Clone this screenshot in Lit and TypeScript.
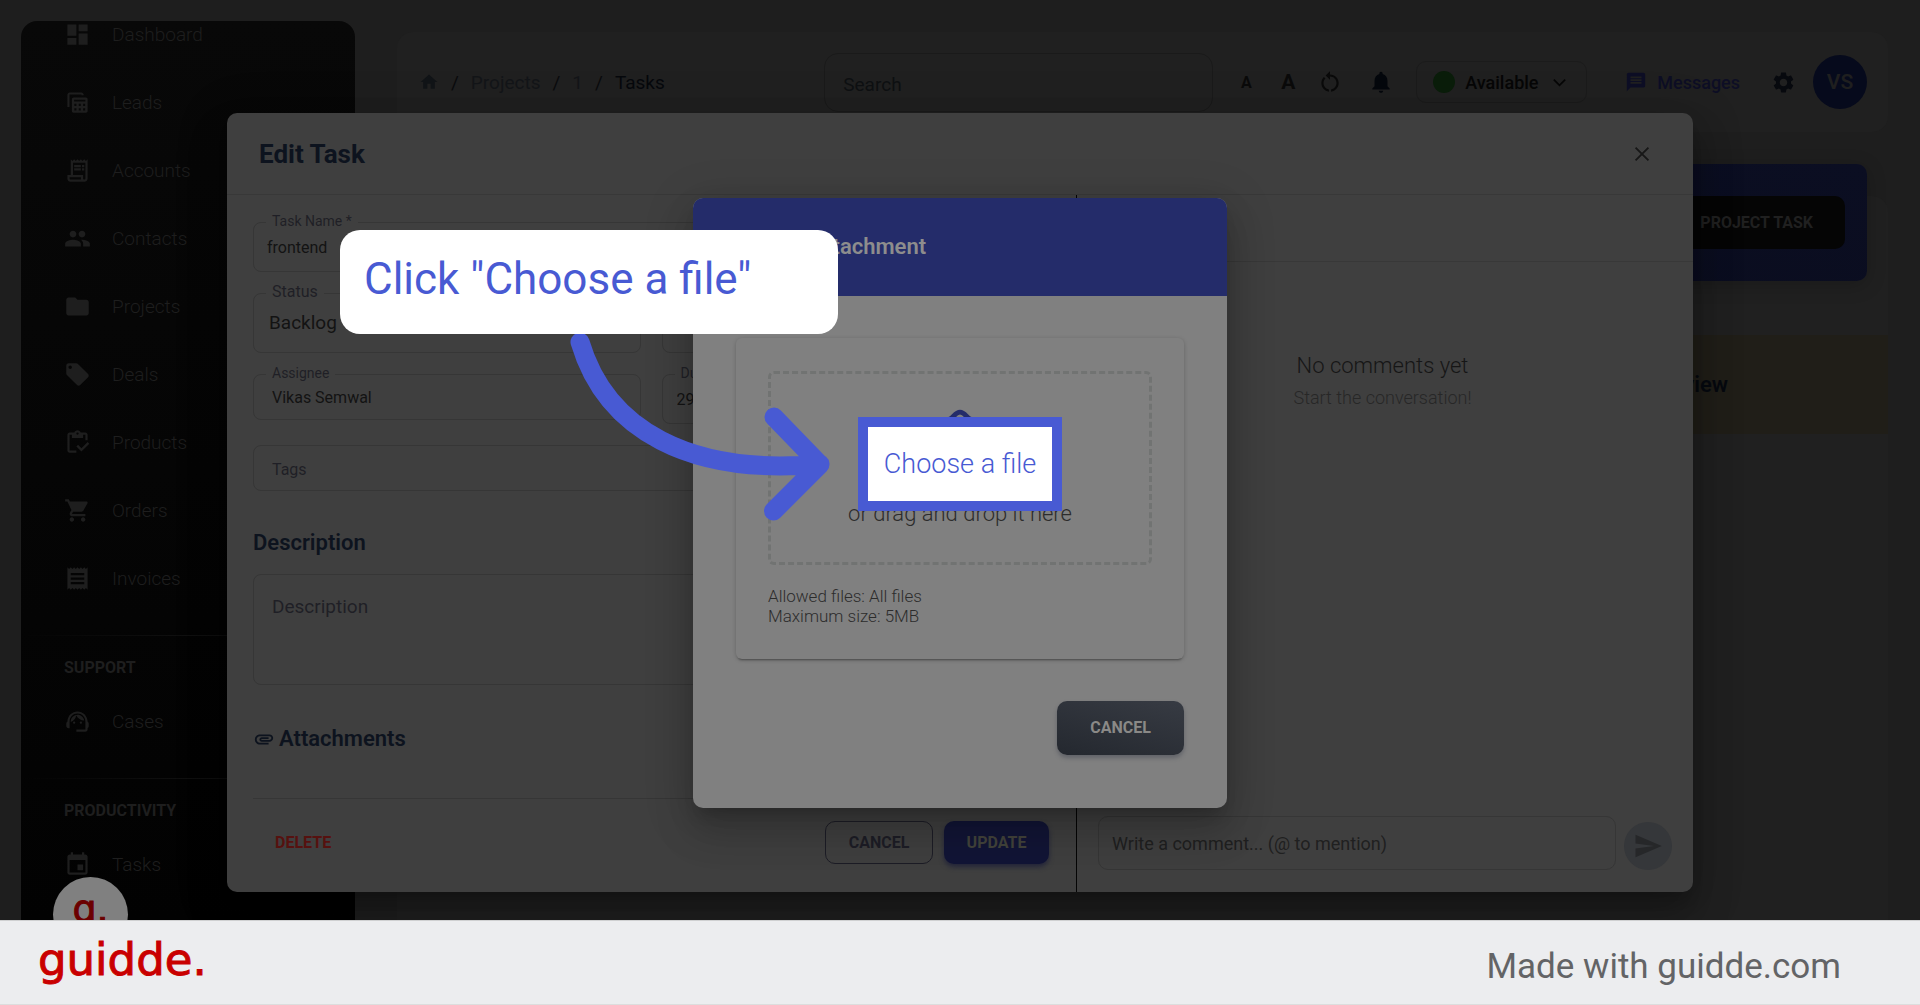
import { LitElement, html, css, svg, nothing } from "lit";
import { customElement, property } from "lit/decorators.js";

const ICONS: Record<string, unknown> = {
  dashboard: svg`<path d="M3 13h8V3H3v10zm0 8h8v-6H3v6zm10 0h8V11h-8v10zm0-18v6h8V3h-8z"/>`,
  leads: svg`<path d="M3 16V5c0-1.100.9-2 2-2h10.500c1.100 0 2 .9 2 2v.5h-2V4.800H4.900V16z"/><path fill-rule="evenodd" d="M8.500 7.500h11c.8 0 1.500.7 1.500 1.500v10.500c0 .8-.7 1.500-1.500 1.500h-11c-.8 0-1.500-.7-1.500-1.500V9c0-.8.7-1.500 1.500-1.500zM9 9.500v1.500h10V9.500zM9.200 13v2h1.800v-2zm3.900 0v2h1.800v-2zm3.900 0v2h1.800v-2zM9.200 17v2h1.800v-2zm3.900 0v2h1.800v-2zm3.900 0v2h1.800v-2z"/>`,
  accounts: svg`<path d="M19.500 3.500 18 2l-1.500 1.500L15 2l-1.500 1.500L12 2l-1.500 1.500L9 2 7.500 3.500 6 2v14H3v3c0 1.660 1.340 3 3 3h12c1.660 0 3-1.340 3-3V2l-1.500 1.500zM15 20H6c-.55 0-1-.45-1-1v-1h10v2zm4-1c0 .55-.45 1-1 1s-1-.45-1-1v-3H8V5h11v14z"/><path d="M9 7h6v2H9zM16 7h2v2h-2zM9 10h6v2H9zM16 10h2v2h-2z"/>`,
  contacts: svg`<path d="M16 11c1.660 0 2.990-1.340 2.990-3S17.660 5 16 5c-1.660 0-3 1.340-3 3s1.340 3 3 3zm-8 0c1.660 0 2.990-1.340 2.990-3S9.660 5 8 5C6.340 5 5 6.340 5 8s1.340 3 3 3zm0 2c-2.330 0-7 1.170-7 3.500V19h14v-2.500c0-2.330-4.670-3.500-7-3.500zm8 0c-.29 0-.62.020-.97.050 1.160.84 1.970 1.970 1.970 3.450V19h6v-2.500c0-2.330-4.670-3.500-7-3.500z"/>`,
  folder: svg`<path d="M10 4H4c-1.100 0-1.990.9-1.990 2L2 18c0 1.100.9 2 2 2h16c1.100 0 2-.9 2-2V8c0-1.100-.9-2-2-2h-8l-2-2z"/>`,
  tag: svg`<path d="M21.410 11.580l-9-9C12.050 2.220 11.550 2 11 2H4c-1.100 0-2 .9-2 2v7c0 .55.22 1.050.59 1.420l9 9c.36.36.86.58 1.410.58.55 0 1.050-.22 1.410-.59l7-7c.37-.36.59-.86.59-1.410 0-.55-.23-1.060-.59-1.420zM5.500 7C4.670 7 4 6.330 4 5.500S4.670 4 5.500 4 7 4.670 7 5.500 6.330 7 5.500 7z"/>`,
  products: svg`<path d="M5 5h2v3h10V5h2v5h2V5c0-1.100-.9-2-2-2h-4.180C14.400 1.840 13.300 1 12 1s-2.400.84-2.820 2H5c-1.100 0-2 .9-2 2v14c0 1.100.9 2 2 2h6v-2H5V5zm7-2c.55 0 1 .45 1 1s-.45 1-1 1-1-.45-1-1 .45-1 1-1z"/><path d="M21 11.500 15.510 17l-3.010-3-1.500 1.500 4.510 4.500L22.500 13z"/>`,
  cart: svg`<path d="M7 18c-1.100 0-1.990.9-1.990 2S5.900 22 7 22s2-.9 2-2-.9-2-2-2zM1 2v2h2l3.600 7.590-1.350 2.450c-.16.28-.25.61-.25.96 0 1.100.9 2 2 2h12v-2H7.420c-.14 0-.25-.11-.25-.25l.03-.12.9-1.630h7.450c.75 0 1.410-.41 1.750-1.030l3.580-6.490c.08-.14.12-.31.12-.48 0-.55-.45-1-1-1H5.210l-.94-2H1zm16 16c-1.100 0-1.990.9-1.990 2s.89 2 1.990 2 2-.9 2-2-.9-2-2-2z"/>`,
  invoices: svg`<path d="M18 17H6v-2h12v2zm0-4H6v-2h12v2zm0-4H6V7h12v2zM3 22l1.500-1.500L6 22l1.500-1.500L9 22l1.500-1.500L12 22l1.500-1.500L15 22l1.500-1.500L18 22l1.500-1.500L21 22V2l-1.500 1.500L18 2l-1.500 1.500L15 2l-1.500 1.500L12 2l-1.500 1.500L9 2 7.500 3.500 6 2 4.500 3.500 3 2v20z"/>`,
  agent: svg`<path d="M21 12.220C21 6.730 16.740 3 12 3c-4.690 0-9 3.650-9 9.280-.6.34-1 .98-1 1.720v2c0 1.100.9 2 2 2h1v-6.100c0-3.870 3.130-7 7-7s7 3.130 7 7V19h-8v2h8c1.100 0 2-.9 2-2v-1.220c.59-.31 1-.92 1-1.640v-2.300c0-.7-.41-1.310-1-1.620z"/><circle cx="9" cy="13" r="1"/><circle cx="15" cy="13" r="1"/><path d="M18 11.030C17.520 8.180 15.040 6 12.050 6c-3.030 0-6.290 2.510-6.030 6.450 2.470-1.010 4.330-3.210 4.860-5.890 1.310 2.630 4 4.440 7.120 4.470z"/>`,
  event: svg`<path d="M17 12h-5v5h5v-5zM16 1v2H8V1H6v2H5c-1.110 0-1.990.9-1.990 2L3 19c0 1.100.89 2 2 2h14c1.100 0 2-.9 2-2V5c0-1.100-.9-2-2-2h-1V1h-2zm3 18H5V8h14v11z"/>`,
  home: svg`<path d="M10 20v-6h4v6h5v-8h3L12 3 2 12h3v8z"/>`,
  restart: svg`<path d="M12 5V2L8 6l4 4V7c3.310 0 6 2.690 6 6 0 2.970-2.170 5.430-5 5.910v2.020c3.950-.49 7-3.850 7-7.930 0-4.420-3.580-8-8-8zm-6 8c0-1.650.67-3.150 1.760-4.240L6.340 7.340C4.900 8.790 4 10.790 4 13c0 4.080 3.050 7.440 7 7.930v-2.020c-2.830-.48-5-2.940-5-5.910z"/>`,
  bell: svg`<path d="M12 22c1.100 0 2-.9 2-2h-4c0 1.100.89 2 2 2zm6-6v-5c0-3.070-1.640-5.640-4.500-6.320V4c0-.83-.67-1.500-1.500-1.500s-1.500.67-1.500 1.500v.68C7.630 5.360 6 7.920 6 11v5l-2 2v1h16v-1l-2-2z"/>`,
  chevron: svg`<path d="M4 8l8 8 8-8" fill="none" stroke="currentColor" stroke-width="2.400"/>`,
  message: svg`<path d="M20 2H4c-1.100 0-1.990.9-1.990 2L2 22l4-4h14c1.100 0 2-.9 2-2V4c0-1.100-.9-2-2-2zM6 12h12v2H6v-2zm0-3h12v2H6V9zm12-1H6V6h12v2z"/>`,
  gear: svg`<path d="M19.140 12.940c.04-.3.06-.61.06-.94 0-.32-.02-.64-.07-.94l2.030-1.580c.18-.14.23-.41.12-.61l-1.920-3.320c-.12-.22-.37-.29-.59-.22l-2.390.96c-.5-.38-1.030-.7-1.620-.94l-.36-2.540c-.04-.24-.24-.41-.48-.41h-3.840c-.24 0-.43.17-.47.41l-.36 2.540c-.59.24-1.130.57-1.620.94l-2.390-.96c-.22-.08-.47 0-.59.22L2.740 8.870c-.12.21-.08.47.12.61l2.030 1.580c-.05.3-.09.63-.09.94s.02.64.07.94l-2.030 1.580c-.18.14-.23.41-.12.61l1.920 3.320c.12.22.37.29.59.22l2.390-.96c.5.38 1.030.7 1.620.94l.36 2.540c.05.24.24.41.48.41h3.840c.24 0 .44-.17.47-.41l.36-2.540c.59-.24 1.130-.56 1.620-.94l2.390.96c.22.08.47 0 .59-.22l1.920-3.320c.12-.22.07-.47-.12-.61l-2.010-1.580zM12 15.600c-1.980 0-3.600-1.620-3.600-3.600s1.620-3.600 3.600-3.600 3.600 1.620 3.600 3.600-1.620 3.600-3.600 3.600z"/>`,
  send: svg`<path d="M2.010 21L23 12 2.010 3 2 10l15 2-15 2z"/>`,
  clip: svg`<path d="M2 12.500C2 9.460 4.460 7 7.500 7H18c2.210 0 4 1.790 4 4s-1.790 4-4 4H9.500C8.120 15 7 13.880 7 12.500S8.120 10 9.500 10H17v2H9.410c-.55 0-.55 1 0 1H18c1.100 0 2-.9 2-2s-.9-2-2-2H7.500C5.570 9 4 10.570 4 12.500S5.570 16 7.500 16H17v2H7.500C4.460 18 2 15.540 2 12.500z"/>`,
  close: svg`<path d="M5 5l14 14M19 5L5 19" fill="none" stroke="currentColor" stroke-width="2"/>`,
  cloud: svg`<path d="M6 20a5 5 0 0 1-4-8c0-3.200 1-5.200 3.800-5.800C8.400 6 9 2.200 12 2.200S15.600 6 18.200 6.200C21 6.800 22 8.800 22 12a5 5 0 0 1-4 8z" fill="none" stroke="currentColor" stroke-width="2.600"/>`,
};

@customElement("ui-icon")
export class UiIcon extends LitElement {
  static styles = css`
    :host { display: inline-flex; width: 24px; height: 24px; flex: none; }
    svg { width: 100%; height: 100%; fill: currentColor; display: block; }
  `;
  @property() name = "";
  render() {
    return html`<svg viewBox="0 0 24 24" aria-hidden="true">${ICONS[this.name] ?? nothing}</svg>`;
  }
}

@customElement("side-nav")
export class SideNav extends LitElement {
  static styles = css`
    :host {
      display: block; width: 334px; flex: none; overflow: hidden; box-sizing: border-box;
      border-radius: 16px 16px 0 0;
      background: linear-gradient(#080808, #020202);
      color: #1e1e1e;
    }
    .scroll { margin-top: -21px; }
    .item {
      display: flex; align-items: center; gap: 21px; height: 68px; padding-left: 43px;
      color: inherit; text-decoration: none; font-size: 19px; font-weight: 300;
    }
    .item ui-icon { width: 27px; height: 27px; }
    .rule { border: 0; height: 1px; margin: 23px 0 0; background: linear-gradient(90deg, transparent, #101010, transparent); }
    h2 { margin: 22px 0 9px 43px; font-size: 16px; line-height: 20px; font-weight: 700; }
  `;
  private main = [
    ["dashboard", "Dashboard"], ["leads", "Leads"], ["accounts", "Accounts"],
    ["contacts", "Contacts"], ["folder", "Projects"], ["tag", "Deals"],
    ["products", "Products"], ["cart", "Orders"], ["invoices", "Invoices"],
  ];
  private item(icon: string, label: string) {
    return html`<a class="item" href="#"><ui-icon name=${icon}></ui-icon>${label}</a>`;
  }
  render() {
    return html`<nav class="scroll">
      ${this.main.map(([i, l]) => this.item(i, l))}
      <hr class="rule" />
      <h2>SUPPORT</h2>
      ${this.item("agent", "Cases")}
      <hr class="rule" />
      <h2>PRODUCTIVITY</h2>
      ${this.item("event", "Tasks")}
    </nav>`;
  }
}

@customElement("top-bar")
export class TopBar extends LitElement {
  static styles = css`
    :host {
      display: flex; align-items: center; height: 100px; box-sizing: border-box;
      padding: 0 21px 0 22px; border-radius: 16px; background: #202020; color: #0a0b0d;
    }
    button { font: inherit; color: inherit; background: none; border: 0; padding: 0; }
    a { color: inherit; text-decoration: none; }
    .crumbs { flex: 1; display: flex; align-items: center; gap: 12px; font-size: 19px; }
    .crumbs a { color: #131518; }
    .crumbs a.here { color: #06080c; }
    .crumbs ui-icon { width: 20px; height: 20px; color: #111417; display: flex; }
    .search {
      box-sizing: border-box; width: 389px; height: 59px; margin-right: 12px; padding: 5px 18px 0;
      border: 1px solid #1a1a1a; border-radius: 14px; background: none; outline: none;
      font: 400 19px Roboto, sans-serif; color: #0e1012;
    }
    .search::placeholder { color: #0e1012; opacity: 1; }
    .tool { width: 42px; height: 42px; display: grid; place-items: center; color: #0a0a0a; }
    .small { font-size: 16px; font-weight: 700; }
    .large { font-size: 21px; font-weight: 700; }
    .bell { margin-left: 9px; color: #04070c; }
    .bell ui-icon, .tool ui-icon { width: 26px; height: 26px; }
    .status {
      box-sizing: border-box; width: 171px; height: 42px; margin-left: 14px; padding: 0 18px 0 16px;
      display: flex; align-items: center; border: 1px solid #1b1b1b; border-radius: 10px;
      font-size: 18px; font-weight: 500; color: #060606;
    }
    .dot { width: 22px; height: 22px; border-radius: 50%; background: #0a1d0a; margin-right: 10px; }
    .status ui-icon { width: 17px; height: 17px; margin-left: auto; }
    .messages {
      display: flex; align-items: center; gap: 10px; margin-left: 38px;
      font-size: 18px; font-weight: 500; color: #0d0e25;
    }
    .messages ui-icon { width: 22px; height: 22px; }
    .gear { margin-left: 31px; display: grid; color: #07090e; }
    .gear ui-icon { width: 25px; height: 25px; }
    .avatar {
      width: 54px; height: 54px; margin-left: 17px; border-radius: 50%;
      background: #060a1c; color: #1f1f1f; display: grid; place-items: center;
      font-size: 21px; font-weight: 600;
    }
  `;
  render() {
    return html`
      <nav class="crumbs" aria-label="Breadcrumb">
        <a href="#" aria-label="Home"><ui-icon name="home"></ui-icon></a><span>/</span>
        <a href="#">Projects</a><span>/</span>
        <a href="#">1</a><span>/</span>
        <a class="here" href="#">Tasks</a>
      </nav>
      <input class="search" type="search" placeholder="Search" aria-label="Search" />
      <button class="tool small">A</button>
      <button class="tool large">A</button>
      <button class="tool" aria-label="Reset text size"><ui-icon name="restart"></ui-icon></button>
      <button class="tool bell" aria-label="Notifications"><ui-icon name="bell"></ui-icon></button>
      <button class="status"><span class="dot"></span>Available<ui-icon name="chevron"></ui-icon></button>
      <a class="messages" href="#"><ui-icon name="message"></ui-icon>Messages</a>
      <button class="gear" aria-label="Settings"><ui-icon name="gear"></ui-icon></button>
      <span class="avatar">VS</span>
    `;
  }
}

@customElement("task-dialog")
export class TaskDialog extends LitElement {
  static styles = css`
    :host {
      display: block; box-sizing: border-box; border-radius: 10px; overflow: hidden;
      background: #3f3f3f; color: #131313;
      box-shadow: 0 11px 15px -7px rgba(0, 0, 0, 0.2), 0 24px 38px 3px rgba(0, 0, 0, 0.2), 0 9px 46px 8px rgba(0, 0, 0, 0.15);
    }
    button { font: inherit; color: inherit; background: none; border: 0; padding: 0; }
    .head {
      display: flex; justify-content: space-between; align-items: center; height: 81px;
      padding: 0 40px 0 32px; border-bottom: 1px solid #383838;
    }
    h1 { margin: 0; font-size: 26px; line-height: 32px; font-weight: 700; color: #0d131e; }
    .close { display: grid; color: #171717; }
    .close ui-icon { width: 22px; height: 22px; }
    .body { display: grid; grid-template-columns: 850px 1fr; }
    .form { box-sizing: border-box; padding: 27px 27px 28px 26px; border-right: 1px solid #050505; }
    .grid { display: grid; grid-template-columns: 1fr 1fr; gap: 21px; align-items: start; }
    .wide { grid-column: 1 / -1; }
    .field { position: relative; display: grid; }
    .field label {
      position: absolute; left: 13px; top: -10px; padding: 0 6px; background: #3f3f3f;
      font-size: 14px; line-height: 18px; color: #1f1f26;
    }
    .field label.big { font-size: 16px; }
    .box {
      box-sizing: border-box; width: 100%; height: 50px; padding: 0 18px; margin: 0;
      border: 1px solid #363636; border-radius: 8px; background: none; outline: none;
      font: 400 16px Roboto, sans-serif; color: #131313; appearance: none; resize: none;
    }
    .box::placeholder { color: #1f1f26; opacity: 1; }
    .name { padding: 0 13px; }
    .tall { height: 60px; font-size: 19px; padding: 0 15px 2px; }
    .short { height: 46px; }
    .tags { padding-top: 2px; }
    .date { padding: 0 14px; }
    .notes { height: 111px; padding: 20px 18px; font-size: 19px; line-height: 24px; display: block; }
    h2 {
      display: flex; align-items: center; gap: 4px; margin: 40px 0 19px;
      font-size: 22px; line-height: 24px; font-weight: 600; color: #0d131e;
    }
    h2.files { margin: 42px 0 47px; }
    h2 ui-icon { width: 22px; height: 22px; }
    .actions {
      display: flex; align-items: center; gap: 11px; padding-top: 22px; border-top: 1px solid #363636;
      font-size: 16px; font-weight: 700;
    }
    .delete { margin: 0 auto 0 22px; color: #56110f; }
    .actions .outline, .actions .solid { height: 43px; border-radius: 10px; }
    .actions .outline { width: 108px; border: 1px solid #1d1d26; color: #1d1d26; }
    .actions .solid { width: 105px; background: #121536; color: #43443c; box-shadow: 0 3px 5px #24263b; }
    .comments { display: flex; flex-direction: column; }
    .bar { height: 66px; border-bottom: 1px solid #383838; }
    .empty { flex: 1; padding: 91px 5px 0 0; text-align: center; font-weight: 300; }
    .empty p { margin: 0; font-size: 22px; line-height: 26px; color: #161616; }
    .empty small { display: block; margin-top: 10px; font-size: 18px; line-height: 18px; color: #272727; }
    .compose { display: flex; align-items: flex-end; gap: 8px; padding: 0 21px 22px; }
    .write { flex: 1; height: 54px; padding: 0 13px; border-radius: 10px; font-size: 18px; }
    .write::placeholder { color: #202020; }
    .send {
      width: 48px; height: 48px; flex: none; border-radius: 50%; background: #35373a;
      display: grid; place-items: center; color: #262729;
    }
    .send ui-icon { width: 30px; height: 30px; }
  `;
  render() {
    return html`
      <header class="head">
        <h1>Edit Task</h1>
        <button class="close" aria-label="Close"><ui-icon name="close"></ui-icon></button>
      </header>
      <div class="body">
        <form class="form">
          <div class="grid">
            <div class="field wide">
              <label for="name">Task Name *</label>
              <input class="box name" id="name" value="frontend" />
            </div>
            <div class="field">
              <label class="big" for="status">Status</label>
              <select class="box tall" id="status"><option>Backlog</option></select>
            </div>
            <div class="field"><input class="box tall" aria-label="Priority" /></div>
            <div class="field">
              <label for="assignee">Assignee</label>
              <input class="box short" id="assignee" value="Vikas Semwal" />
            </div>
            <div class="field">
              <label for="due">Due</label>
              <input class="box date" id="due" value="29" />
            </div>
            <div class="field wide">
              <input class="box short tags" placeholder="Tags" aria-label="Tags" />
            </div>
          </div>
          <h2>Description</h2>
          <textarea class="box notes" placeholder="Description" aria-label="Description"></textarea>
          <h2 class="files"><ui-icon name="clip"></ui-icon>Attachments</h2>
          <div class="actions">
            <button type="button" class="delete">DELETE</button>
            <button type="button" class="outline">CANCEL</button>
            <button type="button" class="solid">UPDATE</button>
          </div>
        </form>
        <section class="comments">
          <div class="bar"></div>
          <div class="empty">
            <p>No comments yet</p>
            <small>Start the conversation!</small>
          </div>
          <div class="compose">
            <input class="box write" placeholder="Write a comment... (@ to mention)" aria-label="Comment" />
            <button class="send" aria-label="Send"><ui-icon name="send"></ui-icon></button>
          </div>
        </section>
      </div>
    `;
  }
}

@customElement("upload-dialog")
export class UploadDialog extends LitElement {
  static styles = css`
    :host {
      display: block; width: 534px; border-radius: 10px; overflow: hidden; background: #808080;
      box-shadow: 0 11px 15px -7px rgba(0, 0, 0, 0.2), 0 24px 38px 3px rgba(0, 0, 0, 0.14), 0 9px 46px 8px rgba(0, 0, 0, 0.12);
    }
    header { display: flex; align-items: center; height: 98px; padding: 0 43px; background: #242c6a; }
    h2 { margin: 0; font-size: 22px; line-height: 28px; font-weight: 600; color: #8d8d8d; }
    .body { padding: 42px 43px 53px; }
    .card {
      padding: 33px 32px; border-radius: 6px;
      box-shadow: 0 3px 2px -2px rgba(0, 0, 0, 0.3), 0 1px 4px rgba(0, 0, 0, 0.22);
    }
    .zone {
      position: relative; box-sizing: border-box; height: 194px; padding-top: 43px;
      display: flex; flex-direction: column; align-items: center;
      border: 3px dashed #717372; border-radius: 6px;
    }
    .zone ui-icon { position: absolute; top: 34px; width: 44px; height: 44px; color: #242c6a; }
    .choose {
      position: relative; z-index: 1; box-sizing: border-box; width: 204px; height: 94px;
      display: grid; place-items: center; border: 10px solid #485ad3; background: #fff;
      font-size: 27px; font-weight: 300; color: #485ad3;
    }
    .file { position: absolute; width: 1px; height: 1px; opacity: 0; }
    .drag { margin: -9px 0 0; font-size: 22px; line-height: 24px; font-weight: 300; color: #2c2c2c; }
    .limits { margin: 21px 0 0; font-size: 17px; line-height: 20px; font-weight: 300; color: #2c2c2c; }
    .foot { display: flex; justify-content: flex-end; margin-top: 42px; }
    .cancel {
      width: 127px; height: 54px; border: 0; border-radius: 10px; color: #8a8987;
      background: linear-gradient(195deg, #373b43, #24282f); box-shadow: 0 3px 4px rgba(50, 54, 70, 0.4);
      font: 700 16px Roboto, sans-serif;
    }
  `;
  render() {
    return html`
      <header><h2>Upload Attachment</h2></header>
      <div class="body">
        <div class="card">
          <div class="zone">
            <ui-icon name="cloud"></ui-icon>
            <input class="file" id="file" type="file" />
            <label class="choose" for="file">Choose a file</label>
            <p class="drag">or drag and drop it here</p>
          </div>
          <p class="limits">Allowed files: All files<br />Maximum size: 5MB</p>
        </div>
        <div class="foot"><button class="cancel">CANCEL</button></div>
      </div>
    `;
  }
}

@customElement("app-root")
export class AppRoot extends LitElement {
  static styles = css`
    :host {
      position: relative; display: flex; flex-direction: column; height: 100vh; overflow: hidden;
      font-family: Roboto, sans-serif; background: #1e1e1e;
    }
    .page { flex: 1; min-height: 0; display: flex; gap: 42px; padding: 21px 32px 0 21px; overflow: hidden; }
    .main { flex: 1; min-width: 0; padding-top: 11px; display: flex; flex-direction: column; gap: 64px; }
    .board { flex: 1; border-radius: 16px 16px 0 0; background: #202020; }
    .banner {
      display: flex; justify-content: flex-end; align-items: center; height: 117px; box-sizing: border-box;
      margin: -32px 21px 0; padding-right: 22px; border-radius: 10px;
      background: linear-gradient(195deg, #0b0e22, #090b1a); box-shadow: 0 4px 20px rgba(0, 0, 0, 0.2);
    }
    .add {
      height: 53px; padding: 0 32px; border: 0; border-radius: 10px; background: #050505;
      color: #202020; font: 700 16px Roboto, sans-serif; text-align: right; min-width: 240px;
    }
    .lane {
      display: flex; align-items: center; justify-content: flex-end; height: 99px; box-sizing: border-box;
      margin-top: 54px; padding-right: 160px; background: #201e18;
    }
    .lane h3 { margin: 0; font-size: 22px; font-weight: 600; color: #06090f; }
    .badge {
      position: absolute; left: 53px; bottom: 53px; width: 75px; height: 75px; border-radius: 50%;
      background: #808080; display: flex; justify-content: center; padding-top: 11px; box-sizing: border-box;
      font: 400 38px/42px "DejaVu Sans", sans-serif; color: #6b0000; -webkit-text-stroke: 1px #6b0000; z-index: 1;
    }
    .layer { position: absolute; inset: 0; display: grid; align-items: center; }
    .outer { padding: 0 227px; }
    .inner { justify-items: center; }
    .guide { position: absolute; left: 50%; top: 50%; }
    .arrow { position: absolute; left: -400px; top: -181px; width: 280px; height: 210px; }
    .arrow path { fill: none; stroke: #485ad3; stroke-width: 19; stroke-linecap: round; stroke-linejoin: round; }
    .tip {
      position: absolute; left: -620px; top: -273px; width: 498px; height: 104px; box-sizing: border-box;
      margin: 0; padding: 0 24px 6px; display: flex; align-items: center; border-radius: 20px; background: #fff;
      font: 400 44px Roboto, sans-serif; color: #485ad3; white-space: nowrap;
    }
    .brand {
      position: relative; z-index: 2; flex: none; height: 85px; box-sizing: border-box;
      display: flex; align-items: center; justify-content: space-between; padding: 0 79px 0 38px;
      background: #ecedef; border-top: 1px solid #cfd0d1; border-bottom: 1px solid #dcdddd;
    }
    .logo {
      font: 400 45px/60px "DejaVu Sans", sans-serif; color: #c90000; -webkit-text-stroke: 1px #c90000;
      text-decoration: none; padding-bottom: 6px;
    }
    .made { font-size: 35px; line-height: 40px; color: #636466; padding-top: 8px; }
  `;
  render() {
    return html`
      <div class="page">
        <side-nav></side-nav>
        <main class="main">
          <top-bar></top-bar>
          <section class="board">
            <div class="banner"><button class="add">PROJECT TASK</button></div>
            <div class="lane"><h3>In Review</h3></div>
          </section>
        </main>
      </div>
      <span class="badge">g.</span>
      <div class="layer outer"><task-dialog role="dialog"></task-dialog></div>
      <div class="layer inner"><upload-dialog role="dialog"></upload-dialog></div>
      <div class="guide">
        <svg class="arrow" viewBox="560 322 280 210" aria-hidden="true">
          <path d="M580 342C606 430 690 476 820 464M774 417l46 47.500-46.500 46.500" />
        </svg>
        <p class="tip">Click "Choose a file"</p>
      </div>
      <footer class="brand">
        <a class="logo" href="#">guidde.</a>
        <span class="made">Made with guidde.com</span>
      </footer>
    `;
  }
}
